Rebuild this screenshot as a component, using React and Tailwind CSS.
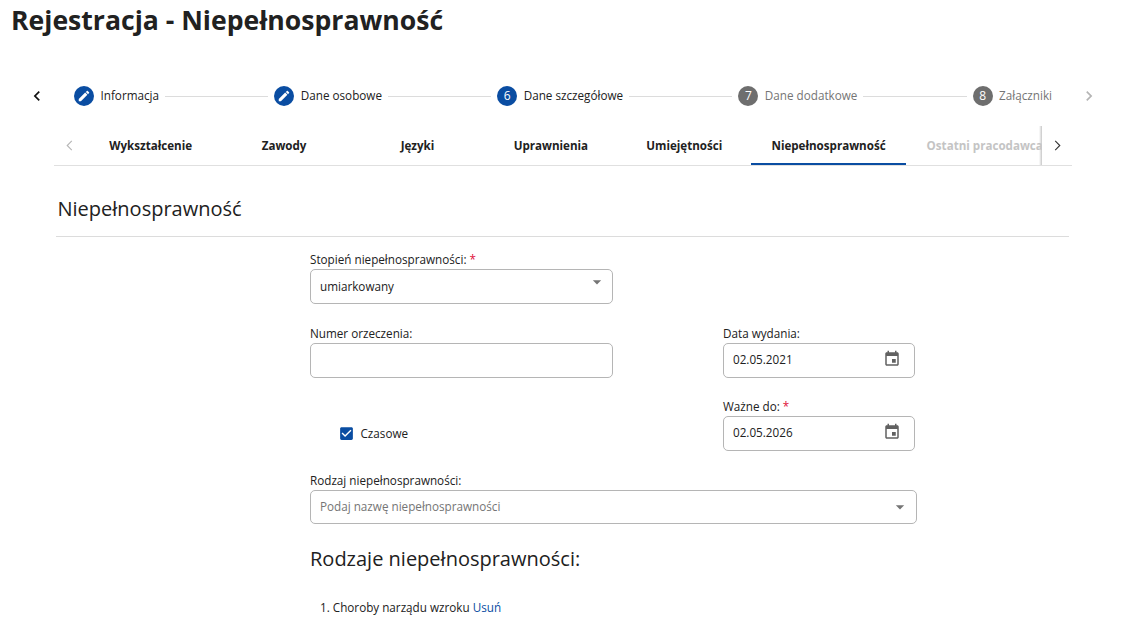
import React from 'react';

const Chevron = ({ dir = 'left', className }) => (
    <svg viewBox="0 0 24 24" className={className} fill="currentColor">
        <path d={dir === 'left' ? 'M15.41 7.41 14 6l-6 6 6 6 1.41-1.41L10.83 12z' : 'M10 6 8.59 7.41 13.17 12l-4.58 4.59L10 18l6-6z'} />
    </svg>
);

const ThinChevron = ({ dir = 'left', className }) => (
    <svg viewBox="0 0 12 12" className={className} fill="none" stroke="currentColor" strokeWidth="1.2">
        <path d={dir === 'left' ? 'M8.5 1 3.5 6l5 5' : 'M3.5 1l5 5-5 5'} />
    </svg>
);

const Caret = ({ className }) => (
    <svg viewBox="0 0 24 24" className={className} fill="currentColor">
        <path d="M7 10l5 5 5-5z" />
    </svg>
);

const CalendarIcon = () => (
    <svg viewBox="0 0 24 24" className="w-[18px] h-[18px] -mt-[4px] text-[#616161]" fill="currentColor">
        <path d="M17 12h-5v5h5v-5zM16 1v2H8V1H6v2H5c-1.11 0-1.99.9-1.99 2L3 19c0 1.1.89 2 2 2h14c1.1 0 2-.9 2-2V5c0-1.1-.9-2-2-2h-1V1h-2zm3 18H5V8h14v11z" />
    </svg>
);

const Step = ({ label, number, state, last }) => (
    <>
        <div className={`w-[20px] h-[20px] rounded-full flex items-center justify-center text-white text-xs shrink-0 ${state === 'todo' ? 'bg-[#6e6e6e]' : 'bg-[#0a4da2]'}`}>
            {number ? number : (
                <svg viewBox="0 0 24 24" className="w-[14px] h-[14px]" fill="currentColor">
                    <path d="M3 17.25V21h3.75L17.81 9.94l-3.75-3.75L3 17.25zM20.71 7.04c.39-.39.39-1.02 0-1.41l-2.34-2.34c-.39-.39-1.02-.39-1.41 0l-1.83 1.83 3.75 3.75 1.83-1.83z" />
                </svg>
            )}
        </div>
        <span className={`ml-[6.5px] text-[11.7px] whitespace-nowrap ${state === 'todo' ? 'text-[#757575]' : 'text-[#212121]'}`}>{label}</span>
        {!last && <div className="flex-1 h-px bg-[#dcdcdc] mx-[6px]" />}
    </>
);

const Tab = ({ label, active, disabled }) => (
    <div className={`relative shrink-0 min-w-[133.4px] px-[20.5px] h-full flex items-center justify-center text-[11.6px] font-bold whitespace-nowrap ${disabled ? 'text-[#c4c4c4]' : 'text-[#212121]'}`}>
        {label}
        {active && <div className="absolute left-0 right-0 bottom-0 h-[2px] bg-[#0a4da2]" />}
    </div>
);

const Label = ({ text, required }) => (
    <div className="text-[11.7px] text-[#212121] leading-[14px] h-[16px]">
        {text} {required && <span className="text-[#e0103a]">*</span>}
    </div>
);

const Field = ({ children, className }) => (
    <div className={`mt-[1px] border border-[#b5b5b5] rounded-[5px] flex items-center text-[11.7px] text-[#212121] pl-[9px] bg-white ${className}`}>
        {children}
    </div>
);

const DateField = ({ label, value, required }) => (
    <div className="w-[192px]">
        <Label text={label} required={required} />
        <Field className="h-[35px] justify-between pr-[13px]">
            <span className="pb-[2px]">{value}</span>
            <CalendarIcon />
        </Field>
    </div>
);

const App = () => {
    return (
        <div className="h-[642px] overflow-hidden bg-white font-['Open_Sans',sans-serif]">
            <h1 className="pl-[11px] pt-[2px] text-[26.6px] leading-[36px] font-bold text-[#212121]">Rejestracja - Niepełnosprawność</h1>

            <div className="flex items-center h-[24px] mt-[46px] pl-[27px] pr-[27px]">
                <Chevron dir="left" className="w-5 h-5 text-[#111] shrink-0" />
                <div className="flex-1 flex items-center ml-[27px] mr-[27px]">
                    <Step label="Informacja" state="done" />
                    <Step label="Dane osobowe" state="done" />
                    <Step label="Dane szczegółowe" number={6} state="current" />
                    <Step label="Dane dodatkowe" number={7} state="todo" />
                    <Step label="Załączniki" number={8} state="todo" last />
                </div>
                <Chevron dir="right" className="w-5 h-5 text-[#b5b5b5] shrink-0" />
            </div>

            <div className="flex items-center h-[40px] mt-[18px] ml-[54px] w-[1018px] border-b border-[#e0e0e0]">
                <div className="w-[30px] shrink-0 flex justify-center">
                    <ThinChevron dir="left" className="w-[11px] h-[11px] text-[#b5b5b5]" />
                </div>
                <div className="flex-1 h-full flex overflow-hidden">
                    <Tab label="Wykształcenie" />
                    <Tab label="Zawody" />
                    <Tab label="Języki" />
                    <Tab label="Uprawnienia" />
                    <Tab label="Umiejętności" />
                    <Tab label="Niepełnosprawność" active />
                    <Tab label="Ostatni pracodawca" disabled />
                </div>
                <div className="relative w-[30px] h-full shrink-0 flex items-center justify-center">
                    <div className="absolute -left-[3px] top-0 bottom-0 w-[3px] bg-gradient-to-l from-[#c8c8c8] to-transparent" />
                    <ThinChevron dir="right" className="w-[11px] h-[11px] text-[#333]" />
                </div>
            </div>

            <h2 className="ml-[57.5px] mt-[29px] text-[20px] leading-[28px] text-[#212121]">Niepełnosprawność</h2>
            <div className="ml-[56px] w-[1013px] mt-[13px] h-px bg-[#dcdcdc]" />

            <div className="ml-[310px] w-[607px] mt-[15px]">
                <div className="w-[303px]">
                    <Label text="Stopień niepełnosprawności:" required />
                    <Field className="h-[35px] justify-between pr-[11px]">
                        <span>umiarkowany</span>
                        <Caret className="w-[20px] h-[20px] text-[#757575] -mt-[9px] -mr-[6px]" />
                    </Field>
                </div>

                <div className="flex justify-between mt-[22px] pr-[2px]">
                    <div className="w-[303px]">
                        <Label text="Numer orzeczenia:" />
                        <Field className="h-[35px]" />
                    </div>
                    <DateField label="Data wydania:" value="02.05.2021" />
                </div>

                <div className="flex justify-between mt-[21px] pr-[2px]">
                    <div className="flex items-end h-[52px] pb-[8px] pl-[30px]">
                        <div className="flex items-center">
                            <svg viewBox="0 0 24 24" className="w-[17px] h-[17px] -ml-[2px] text-[#0a4da2]" fill="currentColor">
                                <path d="M19 3H5c-1.11 0-2 .9-2 2v14c0 1.1.89 2 2 2h14c1.11 0 2-.9 2-2V5c0-1.1-.89-2-2-2zm-9 14l-5-5 1.41-1.41L10 14.17l7.59-7.59L19 8l-9 9z" />
                            </svg>
                            <span className="ml-[5.5px] mt-[1px] text-[11.7px] text-[#212121]">Czasowe</span>
                        </div>
                    </div>
                    <DateField label="Ważne do:" value="02.05.2026" required />
                </div>

                <div className="mt-[22px]">
                    <Label text="Rodzaj niepełnosprawności:" />
                    <Field className="h-[34px] justify-between pr-[6px]">
                        <span className="text-[#757575]">Podaj nazwę niepełnosprawności</span>
                        <Caret className="w-[20px] h-[20px] text-[#757575]" />
                    </Field>
                </div>

                <h2 className="mt-[21px] text-[20px] leading-[28px] text-[#212121]">Rodzaje niepełnosprawności:</h2>
                <div className="mt-[26px] ml-[10px] text-[11.7px] text-[#212121]">
                    1. Choroby narządu wzroku <span className="text-[#0a4da2]">Usuń</span>
                </div>
            </div>
        </div>
    );
};

export default App;
